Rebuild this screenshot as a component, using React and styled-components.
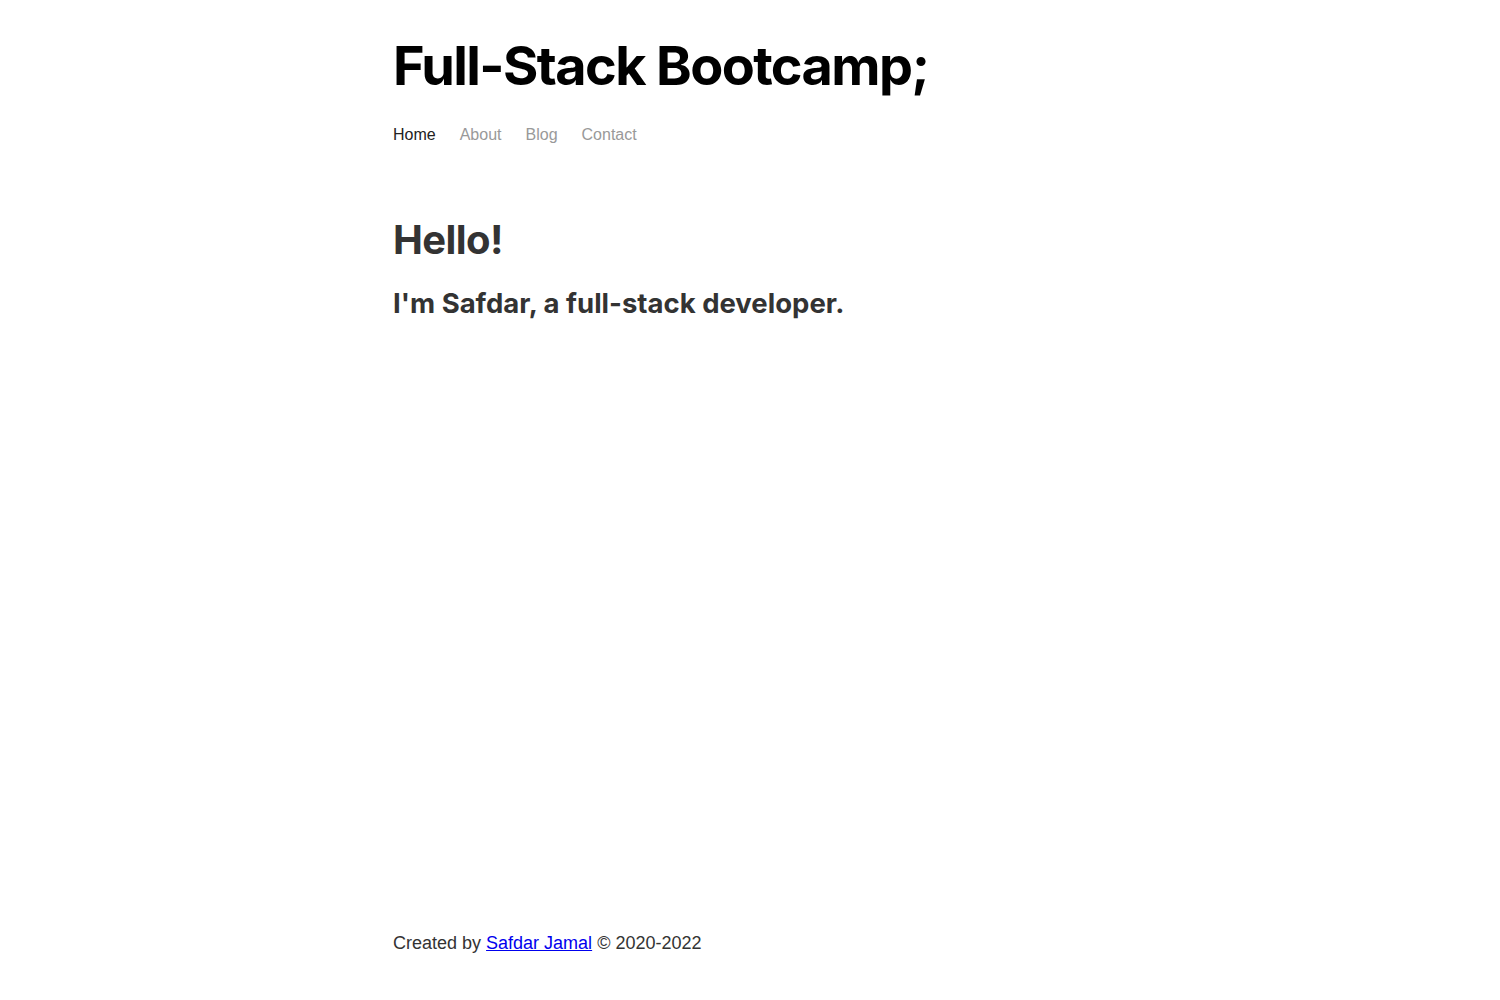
import React from 'react';
import styled, { createGlobalStyle } from 'styled-components';

const GlobalStyle = createGlobalStyle`
  html, body {
    margin: 0;
    padding: 0;
    background: #fff;
  }
  body {
    font-family: "Liberation Sans", Arial, sans-serif;
    color: #333;
  }
`;

const Page = styled('div')`
  box-sizing: border-box;
  min-height: 100vh;
  width: 714px;
  margin: 0 auto;
  display: flex;
  flex-direction: column;
  padding: 36px 0 46px;
`;

const SiteTitle = styled('h1')`
  font-family: Inter, "Noto Sans", sans-serif;
  font-weight: 700;
  font-size: 54px;
  letter-spacing: -1.6px;
  line-height: 60px;
  color: #000;
  margin: 0;
`;

const Nav = styled('nav')`
  display: flex;
  gap: 24px;
  margin-top: 30px;
`;

const NavItem = styled('a')`
  font-size: 16px;
  text-decoration: none;
  color: ${p => (p.$active ? '#222' : '#999')};
  cursor: pointer;
`;

const Main = styled('main')`
  flex: 1;
  margin-top: 72px;
`;

const Hello = styled('h2')`
  font-family: Inter, "Noto Sans", sans-serif;
  font-weight: 700;
  font-size: 40px;
  letter-spacing: -0.6px;
  line-height: 1.2;
  color: #333;
  margin: 0;
`;

const Intro = styled('h3')`
  font-family: Inter, "Noto Sans", sans-serif;
  font-weight: 700;
  font-size: 27.5px;
  line-height: 1.2;
  color: #333;
  margin: 23px 0 0;
`;

const Footer = styled('footer')`
  font-size: 18px;
  color: #333;
`;

const FooterLink = styled('a')`
  color: #0000ee;
`;

export default function App() {
  return (
    <>
      <GlobalStyle />
      <Page>
        <header>
          <SiteTitle>Full-Stack Bootcamp;</SiteTitle>
          <Nav>
            <NavItem $active>Home</NavItem>
            <NavItem>About</NavItem>
            <NavItem>Blog</NavItem>
            <NavItem>Contact</NavItem>
          </Nav>
        </header>
        <Main>
          <Hello>Hello!</Hello>
          <Intro>I'm Safdar, a full-stack developer.</Intro>
        </Main>
        <Footer>
          Created by <FooterLink href="#">Safdar Jamal</FooterLink> © 2020-2022
        </Footer>
      </Page>
    </>
  );
}
